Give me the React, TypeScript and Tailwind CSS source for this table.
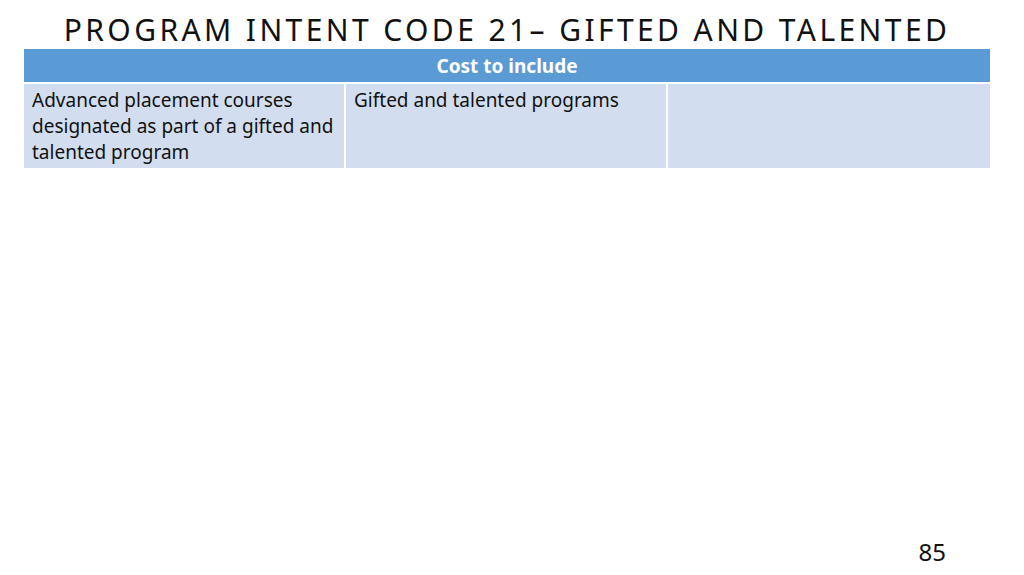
export default function App() {
  const rows = [
    ['Advanced placement courses designated as part of a gifted and talented program', 'Gifted and talented programs', ''],
  ];

  return (
    <div className="relative w-[1024px] h-[575px] bg-white overflow-hidden font-['Noto_Sans',sans-serif] text-black">
      <div className="flex flex-col px-[24px] pt-[9px]">
        <h1 className="text-center text-[30px] leading-[42px] tracking-[3.4px] text-[#111] ml-[-10px]">
          PROGRAM INTENT CODE 21– GIFTED AND TALENTED
        </h1>
        <div className="w-[966px] mt-[-2px] flex flex-col">
          <div className="h-[35px] bg-[#5b9bd5] flex items-center justify-center text-white font-bold text-[19px] pt-[1px] border-b-2 border-white">
            Cost to include
          </div>
          {rows.map((r, i) => (
            <div key={i} className="grid grid-cols-[322px_322px_322px] bg-[#d2deef] h-[84px]">
              {r.map((c, j) => (
                <div
                  key={j}
                  className={`px-[8px] pt-[3px] text-[19px] leading-[26px] text-[#111] ${j < 2 ? 'border-r-2 border-white' : ''}`}
                >
                  {c}
                </div>
              ))}
            </div>
          ))}
        </div>
      </div>
      <div className="absolute right-[78px] bottom-[5px] text-[24px] text-[#111]">85</div>
    </div>
  );
}
